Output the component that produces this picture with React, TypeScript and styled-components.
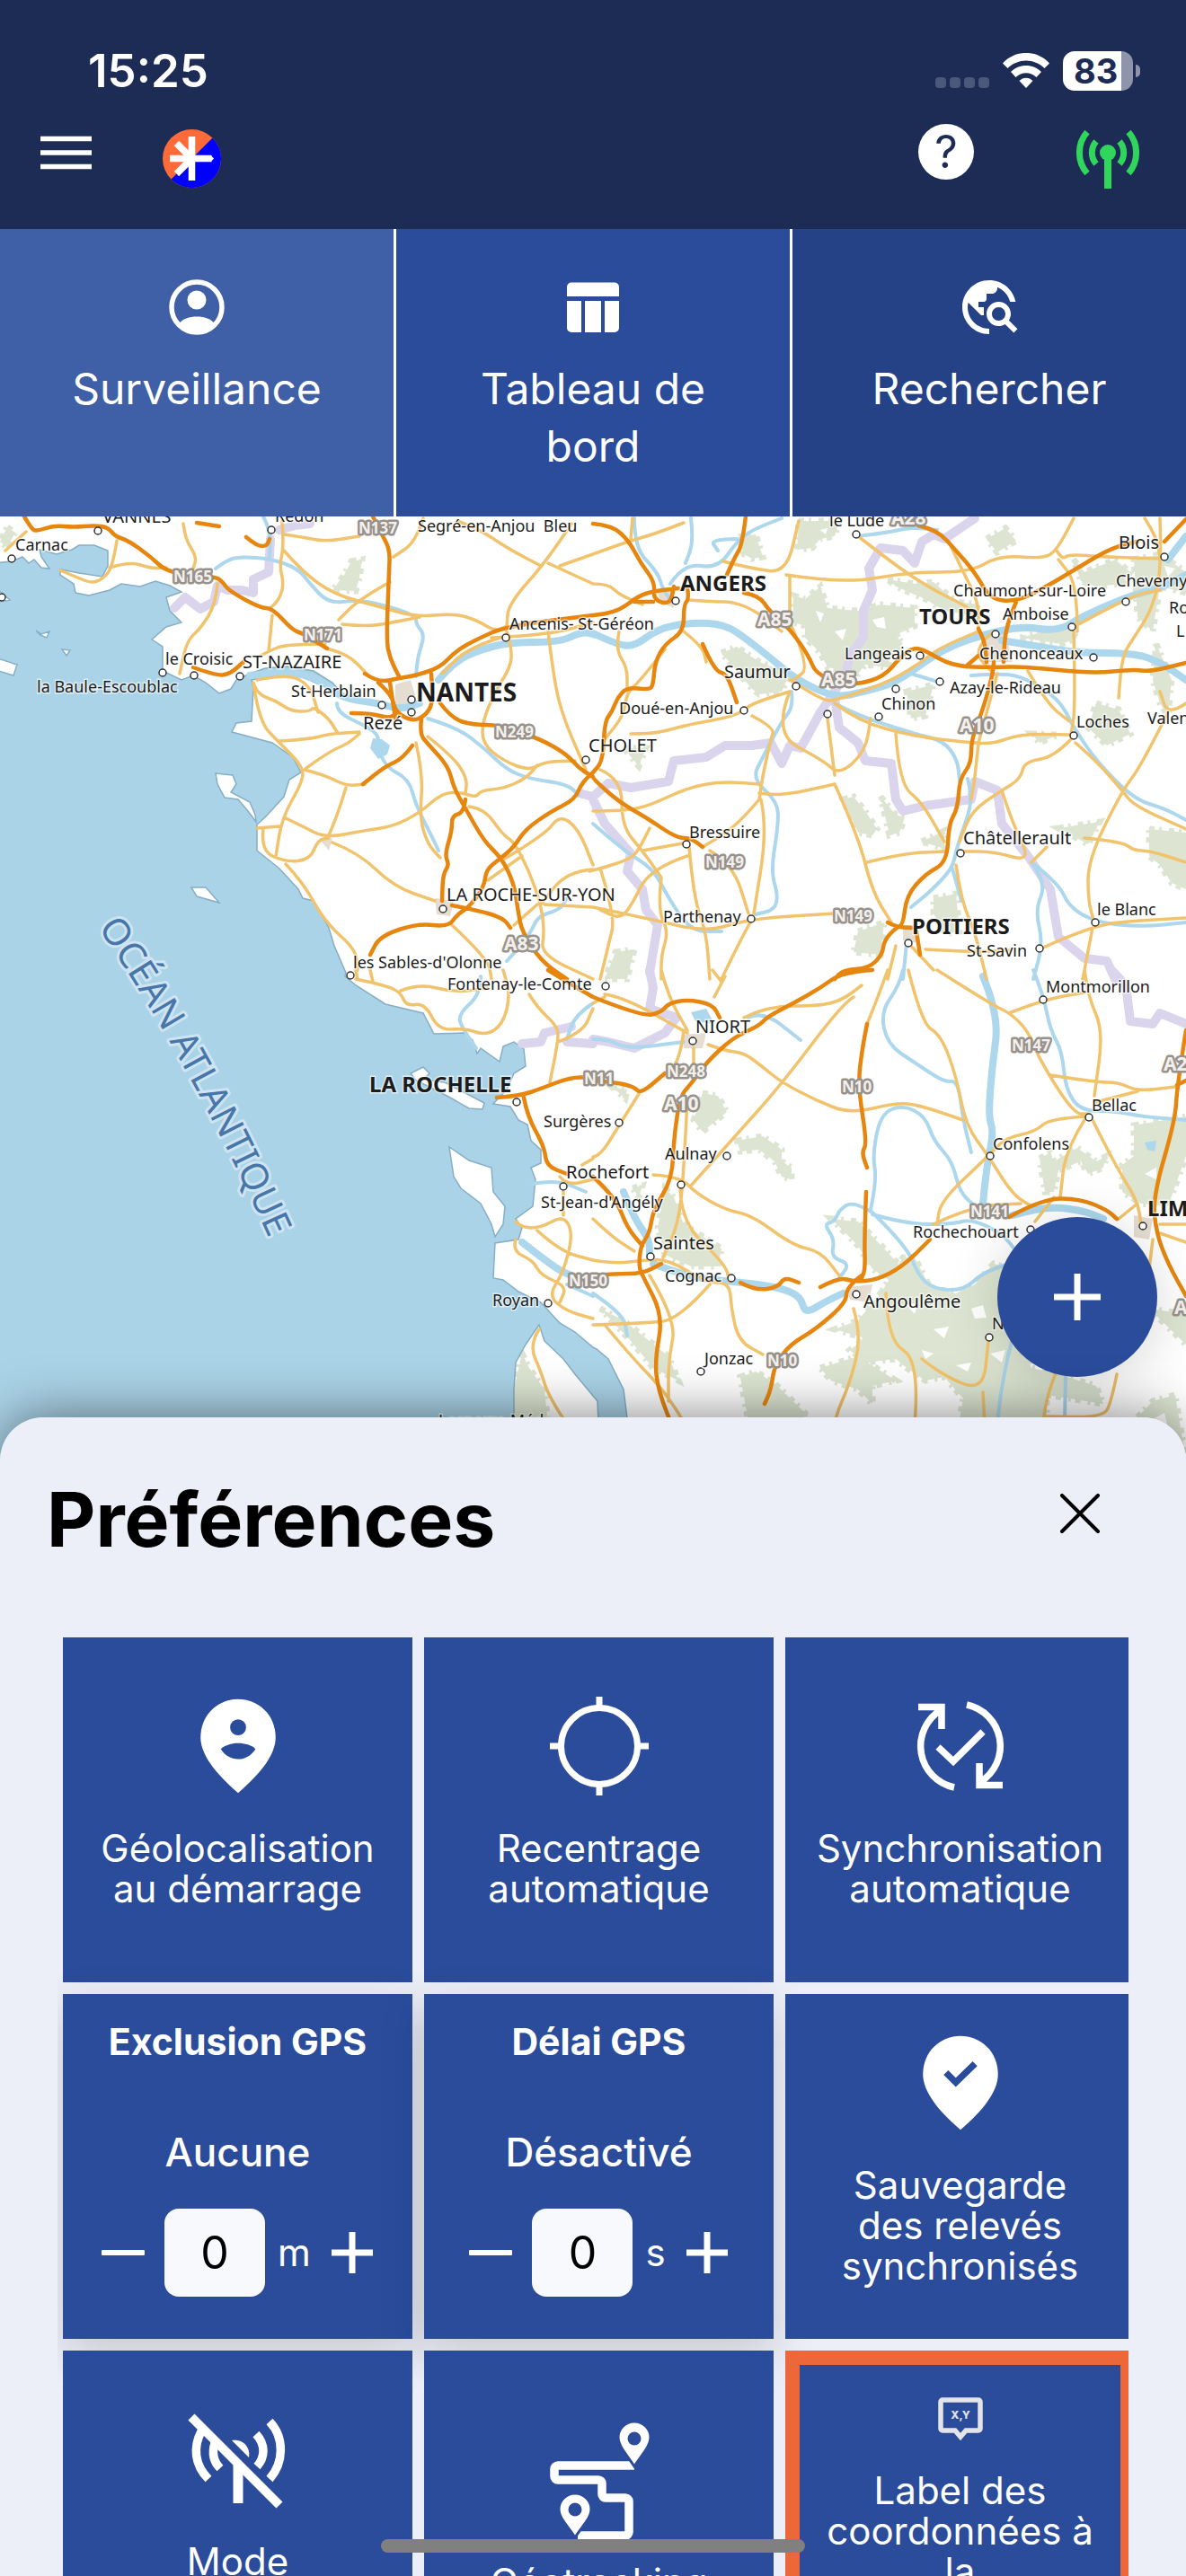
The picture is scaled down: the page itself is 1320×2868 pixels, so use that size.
import React, { useState } from "react";
import styled, { createGlobalStyle } from "styled-components";

const color = {
  header: "#1d2c55",
  blue: "#2a4c9b",
  blueLight: "#3f5fa6",
  blueDark: "#254286",
  sheet: "#eceff8",
  orange: "#ec683b",
  green: "#2fd65b",
  white: "#ffffff",
};

const GlobalStyle = createGlobalStyle`
  *, *::before, *::after { box-sizing: border-box; }
  body {
    margin: 0;
    background: ${color.sheet};
    font-family: Inter, "Liberation Sans", sans-serif;
  }
  button, input { font: inherit; color: inherit; }
  button { margin: 0; padding: 0; border: 0; background: none; cursor: pointer; }
  svg { display: block; }
`;

const Screen = styled.div`
  position: relative;
  display: flex;
  flex-direction: column;
  height: 100vh;
  overflow: hidden;
`;

/* ---------- header ---------- */

const Header = styled.header`
  flex: none;
  background: ${color.header};
  color: ${color.white};
`;

const StatusBar = styled.div`
  display: flex;
  align-items: center;
  justify-content: space-between;
  height: 112px;
  padding: 46px 51px 0 98px;
`;

const Clock = styled.time`
  font-size: 51px;
  line-height: 64px;
  font-weight: 600;
`;

const StatusIcons = styled.div`
  display: flex;
  align-items: center;
  gap: 15px;
`;

const BatteryBox = styled.div`
  display: flex;
  align-items: center;
  gap: 3px;
`;

const BatteryLevel = styled.div`
  width: 78px;
  height: 44px;
  border-radius: 13px;
  padding-left: 12px;
  background: linear-gradient(to right, #fff 83%, #8e95aa 83%);
  color: ${color.header};
  font-size: 38px;
  line-height: 44px;
  font-weight: 700;
`;

const BatteryNub = styled.div`
  width: 5px;
  height: 14px;
  border-radius: 0 7px 7px 0;
  background: #8e95aa;
`;

const Toolbar = styled.div`
  display: flex;
  align-items: flex-start;
  justify-content: space-between;
  height: 143px;
  padding: 26px 50px 0 41px;
`;

const ToolGroup = styled.div<{ $gap: number }>`
  display: flex;
  align-items: flex-start;
  gap: ${(p) => p.$gap}px;
`;

const ToolButton = styled.button<{ $lowered?: boolean }>`
  padding-top: ${(p) => (p.$lowered ? 6 : 0)}px;
`;

const HelpBadge = styled.span`
  display: block;
  width: 62px;
  height: 62px;
  border-radius: 50%;
  background: ${color.white};
  color: ${color.header};
  font-size: 50px;
  line-height: 62px;
  text-align: center;
`;

/* ---------- tabs ---------- */

const Tabs = styled.nav`
  flex: none;
  display: grid;
  grid-template-columns: repeat(3, minmax(0, 1fr));
  gap: 3px;
  background: ${color.white};
`;

const Tab = styled.button<{ $tone: string }>`
  display: flex;
  flex-direction: column;
  align-items: center;
  gap: 23px;
  padding: 51px 60px 46px;
  background: ${(p) => p.$tone};
  color: ${color.white};
  font-size: 48px;
  line-height: 64px;
`;

/* ---------- map ---------- */

const MapArea = styled.section`
  position: relative;
  flex: none;
`;

const MapSvg = styled.svg`
  width: 100%;
  height: auto;
  font-family: "Noto Sans", "Open Sans", sans-serif;
`;

const AddButton = styled.button`
  position: absolute;
  right: 32px;
  bottom: 92px;
  display: grid;
  place-items: center;
  width: 178px;
  height: 178px;
  border-radius: 50%;
  background: ${color.blue};
  box-shadow: 0 8px 60px rgba(0, 0, 0, 0.16);
`;

/* ---------- preferences sheet ---------- */

const Sheet = styled.section`
  position: relative;
  flex: 1 1 0;
  min-height: 0;
  margin-top: -47px;
  padding: 64px 64px 0 52px;
  border-radius: 48px 48px 0 0;
  background: ${color.sheet};
  box-shadow: 0 0 60px rgba(0, 0, 0, 0.5);
  overflow: hidden auto;
  scrollbar-width: none;
`;

const SheetHead = styled.div`
  display: flex;
  align-items: flex-start;
  justify-content: space-between;
  padding-right: 11px;
  margin-bottom: 81px;
`;

const SheetTitle = styled.h1`
  margin: 0;
  font-size: 84px;
  line-height: 100px;
  font-weight: 700;
  color: #000;
`;

const CloseButton = styled.button`
  display: grid;
  place-items: center;
  width: 86px;
  height: 86px;
`;

const GridViewport = styled.div`
  margin-left: 12px;
  padding-left: 6px;
  overflow: clip;
`;

/* The grid is slightly wider than its viewport, which trims the last column. */
const Grid = styled.div`
  display: grid;
  grid-template-columns: repeat(3, minmax(0, 1fr));
  grid-auto-rows: 384px;
  gap: 13px;
  margin-right: -7px;
`;

const Tile = styled.button`
  display: flex;
  flex-direction: column;
  align-items: center;
  justify-content: center;
  gap: 31px;
  padding: 0 28px 21px;
  background: ${color.blue};
  color: ${color.white};
`;

const OutlinedTile = styled(Tile)`
  justify-content: flex-start;
  padding: 36px 20px 0;
  border: 16px solid ${color.orange};
`;

const TileLabel = styled.span<{ $lines?: number }>`
  min-height: ${(p) => (p.$lines ?? 1) * 45}px;
  font-size: 42px;
  line-height: 45px;
  text-align: center;
`;

const GpsTile = styled.div`
  display: flex;
  flex-direction: column;
  align-items: center;
  padding-top: 29px;
  background: ${color.blue};
  color: ${color.white};
  box-shadow: 0 16px 48px rgba(0, 0, 0, 0.16);
`;

const GpsTitle = styled.h2`
  margin: 0 0 72px;
  font-size: 41px;
  line-height: 48px;
  font-weight: 700;
`;

const GpsState = styled.div`
  margin-bottom: 36px;
  font-size: 44px;
  line-height: 54px;
  font-weight: 500;
`;

const Stepper = styled.div`
  display: flex;
  align-items: center;
`;

const StepButton = styled.button`
  display: grid;
  place-items: center;
  width: 48px;
  height: 98px;
`;

const StepValue = styled.label`
  display: flex;
  align-items: center;
  gap: 14px;
  margin: 0 22px;
  font-size: 42px;
  line-height: 50px;
`;

const StepInput = styled.input`
  width: 112px;
  height: 98px;
  border: 0;
  border-radius: 16px;
  padding: 0;
  background: #f7f9fd;
  color: #000;
  font-size: 50px;
  text-align: center;
`;

const HomeIndicator = styled.div`
  position: absolute;
  left: 50%;
  bottom: 26px;
  width: 472px;
  height: 15px;
  margin-left: -236px;
  border-radius: 8px;
  background: #808080;
`;

/* ---------- icons ---------- */

const WifiIcon = () => (
  <svg width="52" height="40" viewBox="0 0 52 40" fill="#fff">
    <path d="M0 11.500C14-4 38-4 52 11.500L46.500 17C35 5.500 17 5.500 5.500 17z" />
    <path d="M9 21C18 11.500 34 11.500 43 21L37.500 27C31 20.500 21 20.500 14.500 27z" />
    <path d="M18.500 31C22.500 26.500 29.500 26.500 33.500 31L26 39z" />
  </svg>
);

const SignalDots = () => (
  <svg width="60" height="40" viewBox="0 0 60 40" fill="#4c587b">
    {[0, 16, 32, 48].map((x) => (
      <rect key={x} x={x} y="27" width="12" height="12" rx="4" />
    ))}
  </svg>
);

const MenuIcon = () => (
  <svg width="65" height="64" viewBox="0 0 65 64" stroke="#fff" strokeWidth="5.500">
    <path d="M4 16.500H61M4 32H61M4 47.500H61" />
  </svg>
);

const LogoIcon = () => (
  <svg width="65" height="65" viewBox="-32.500 -32.500 65 65">
    <circle r="32.500" fill="#ff6a39" />
    <path d="M23-23A32.500 32.500 0 0 1-23 23z" fill="#0000ff" />
    <path d="M0-24.500V24.500M-24.500 0H22M0 0L-17-17M0 0L-17 17" stroke="#fff" strokeWidth="7.500" fill="none" />
    <path d="M21-3.700L24.500 0L21 3.700z" fill="#fff" />
  </svg>
);

const AntennaIcon = () => (
  <svg width="74" height="68" viewBox="-37 -26 74 68" fill="none" stroke={color.green} strokeWidth="7">
    <circle r="9" fill={color.green} stroke="none" />
    <path d="M0 0V40" strokeWidth="8" />
    <path d="M-13-12.500A19 19 0 0 0-13 12.500M13-12.500A19 19 0 0 1 13 12.500" />
    <path d="M-23-23A35 35 0 0 0-23 23M23-23A35 35 0 0 1 23 23" />
  </svg>
);

const AccountIcon = () => (
  <svg width="72" height="72" viewBox="-36 -36 72 72">
    <circle r="28" fill="none" stroke="#fff" strokeWidth="5.500" />
    <circle cy="-8" r="10.500" fill="#fff" />
    <path d="M-19 18C-14 8 14 8 19 18C11 30-11 30-19 18z" fill="#fff" />
  </svg>
);

const TableIcon = () => (
  <svg width="72" height="72" viewBox="-36 -36 72 72" fill="#fff">
    <path d="M-24-27.500H24A5 5 0 0 1 29-22.500V-12H-29V-22.500A5 5 0 0 1-24-27.500z" />
    <path d="M-29-7H-13V28H-24A5 5 0 0 1-29 23zM-9-7H9V28H-9zM13-7H29V23A5 5 0 0 1 24 28H13z" />
  </svg>
);

const GlobeSearchIcon = () => (
  <svg width="72" height="72" viewBox="0 0 24 24" fill="#fff">
    <path d="M19.300 16.900c.4-.7.7-1.500.7-2.400 0-2.500-2-4.500-4.500-4.500S11 12 11 14.500s2 4.500 4.500 4.500c.9 0 1.700-.3 2.400-.7l3.200 3.200 1.400-1.400-3.200-3.200zm-3.800.1c-1.400 0-2.500-1.100-2.500-2.500s1.100-2.500 2.500-2.500 2.500 1.100 2.500 2.500-1.100 2.500-2.500 2.500zM12 20v2C6.480 22 2 17.520 2 12S6.480 2 12 2c4.840 0 8.870 3.440 9.800 8h-2.070c-.64-2.460-2.400-4.470-4.730-5.410V5c0 1.100-.9 2-2 2h-2v2c0 .55-.45 1-1 1H8v2h2v3H9l-4.790-4.790C4.080 10.790 4 11.380 4 12c0 4.410 3.590 8 8 8z" />
  </svg>
);

const pinShape = "M12 2C7.800 2 4 5.220 4 10.200c0 3.320 2.670 7.250 8 11.800 5.330-4.550 8-8.480 8-11.800C20 5.220 16.200 2 12 2z";

const PersonPinIcon = () => (
  <svg width="120" height="120" viewBox="0.500 0.500 23 23">
    <path d={pinShape} fill="#fff" />
    <circle cx="12" cy="8" r="1.700" fill={color.blue} />
    <path d="M8.300 12.600C10 11 14 11 15.700 12.600C13.900 15.500 10.100 15.500 8.300 12.600z" fill={color.blue} />
  </svg>
);

const CheckPinIcon = () => (
  <svg width="120" height="120" viewBox="0.500 0.500 23 23">
    <path d={pinShape} fill="#fff" />
    <path d="M8.900 9.800L11 11.900L15.100 7.900" fill="none" stroke={color.blue} strokeWidth="1.400" />
  </svg>
);

const TargetIcon = () => (
  <svg width="120" height="120" viewBox="-60 -60 120 120" fill="none" stroke="#fff" strokeWidth="7">
    <circle r="42.500" />
    <path d="M0-55V-42M0 55V42M-55 0H-42M55 0H42" />
  </svg>
);

const SyncCheckIcon = () => (
  <svg width="120" height="120" viewBox="-60 -60 120 120" fill="none" stroke="#fff" strokeWidth="7.500">
    <path d="M-7 46A47 47 0 0 1-22-40M-47-43.500H-21V-19" />
    <path d="M7-46A47 47 0 0 1 22 40M47 43.500H21V19" />
    <path d="M-25 1L-8 17L25-16" />
  </svg>
);

const AntennaOffIcon = () => (
  <svg width="120" height="120" viewBox="-60 -62 120 120" fill="none" stroke="#fff" strokeWidth="9.500">
    <path d="M-52-49L46 49" strokeWidth="10" />
    <path d="M0 4V47" strokeWidth="11" />
    <path d="M-7-23C5-25 14-16 12-4z" fill="#fff" stroke="none" />
    <path d="M-33 20C-49 4-50-16-41-33M-20 8C-28 0-29-10-26-20" />
    <path d="M35-44C52-26 51 2 35 20M20-30C31-18 30-4 21 6" />
  </svg>
);

const RouteIcon = () => (
  <svg width="120" height="120" viewBox="-60 -62 120 120" overflow="visible" fill="none" stroke="#fff" strokeWidth="9.500">
    <path
      d="M39-18H-46A4 4 0 0 0-50-14V-6A4 4 0 0 0-46-2H-1A4 4 0 0 1 3 2V14A4 4 0 0 0 7 18H29A4 4 0 0 1 33 22V56A4 4 0 0 1 29 60H-24"
      strokeLinejoin="round"
    />
    <g fill="#fff" stroke={color.blue} strokeWidth="3">
      <path d="M39-17C29-32 21-40 21-49A18 18 0 0 1 57-49C57-40 49-32 39-17z" />
      <path d="M-27 62C-37 47-45 40-45 31A18 18 0 0 1-9 31C-9 40-17 47-27 62z" />
    </g>
    <g fill={color.blue} stroke="none">
      <circle cx="39" cy="-48" r="7.500" />
      <circle cx="-27" cy="31" r="7.500" />
    </g>
  </svg>
);

const XyLabelIcon = () => (
  <svg width="50" height="50" viewBox="0 0 50 50">
    <path
      d="M5 3H45A2 2 0 0 1 47 5V35A2 2 0 0 1 45 37H31L25 44L19 37H5A2 2 0 0 1 3 35V5A2 2 0 0 1 5 3z"
      fill="none"
      stroke="#e4e4e8"
      strokeWidth="5.500"
    />
    <text x="25" y="24" textAnchor="middle" fontSize="12" fontWeight="800" fill="#e4e4e8">
      X,Y
    </text>
  </svg>
);

const PlusIcon = ({ size, weight }: { size: number; weight: number }) => (
  <svg width={size} height={size} viewBox={`0 0 ${size} ${size}`} stroke="#fff" strokeWidth={weight}>
    <path d={`M${size / 2} 0V${size}M0 ${size / 2}H${size}`} />
  </svg>
);

const MinusIcon = () => (
  <svg width="48" height="6" viewBox="0 0 48 6">
    <rect width="48" height="6" rx="1" fill="#fff" />
  </svg>
);

const CloseIcon = () => (
  <svg width="44" height="44" viewBox="0 0 44 44" stroke="#000" strokeWidth="4" strokeLinecap="round">
    <path d="M2 2L42 42M42 2L2 42" />
  </svg>
);

/* ---------- map data ---------- */

type SheetId = "a" | "b" | "c" | "d";
const origin: Record<SheetId, [number, number]> = {
  a: [0, 570],
  b: [660, 570],
  c: [0, 1080],
  d: [660, 1080],
};

const project = (sheet: SheetId, x: number, y: number): [number, number] => [
  Math.round(origin[sheet][0] + x / 2.376),
  Math.round(origin[sheet][1] + y / 3),
];

const points = (sheet: SheetId, list: string) =>
  list
    .trim()
    .split(/\s+/)
    .map((pair) => {
      const [x, y] = pair.split(",").map(Number);
      return project(sheet, x, y).join(" ");
    });

const lines = (sheet: SheetId, data: string, close = "") =>
  data
    .split(";")
    .filter((part) => part.trim())
    .map((part) => "M" + points(sheet, part).join("L") + close)
    .join("");

/* Rounds the corners of a traced line by running curves between its midpoints. */
const curves = (sheet: SheetId, data: string) =>
  data
    .split(";")
    .filter((part) => part.trim())
    .map((part) => {
      const pts = points(sheet, part).map((p) => p.split(" ").map(Number));
      let d = `M${pts[0].join(" ")}`;
      for (let i = 1; i < pts.length - 1; i++) {
        const [x, y] = pts[i];
        const [nx, ny] = pts[i + 1];
        d += `Q${x} ${y} ${(x + nx) / 2} ${(y + ny) / 2}`;
      }
      return d + `L${pts[pts.length - 1].join(" ")}`;
    })
    .join("");

const seaPath =
  "M" +
  [
    ...points("a", "-20,170 30,165 60,150 75,170 90,158 110,185 130,190 110,150 105,125 150,140 190,125 210,110 250,110 285,130 285,180 270,215 210,205 160,192 160,210 195,240 200,270 235,280 290,262 320,240 370,250 410,232 450,245 480,268 440,285 450,330 480,370 440,385 402,425 430,450 430,530 480,560 510,545 545,570 580,605 610,590 625,560 660,540 700,522 760,515 830,530 880,570 900,600 850,580 800,552 750,540 665,562 670,590 665,700 625,705 612,735 720,770 775,820 795,870 765,895 750,950 700,1020 680,1045 680,1130 740,1190 790,1260 800,1290 830,1300 870,1390 885,1450 915,1540"),
    ...points("c", "912,20 940,50 1020,115 1120,145 1148,212 1225,210 1250,235 1262,278 1272,262 1322,305 1330,255 1360,240 1385,265 1390,320 1360,345 1340,400 1305,448 1350,455 1370,500 1395,515 1405,570 1430,600 1430,645 1405,660 1415,700 1410,790 1365,830 1380,860 1370,900 1310,912 1305,1030 1330,1035 1370,1075 1430,1110 1480,1180 1520,1210 1568,1260"),
    ...points("d", "10,1265 40,1300 80,1400 105,1640 20,1640 12,1440"),
    ...points("c", "1520,1350 1490,1300 1440,1240 1425,1185 1390,1250 1365,1310 1358,1400 1358,1640 -20,1640"),
  ].join("L") +
  "z";

const islands =
  lines("a", "570,872 615,880 625,910 610,935 660,970 675,1010 678,1035 655,1000 630,960 595,955 575,910;505,1255 545,1255 580,1305 520,1285;-5,490 45,510 35,545 -5,530;95,395 110,408 130,400 124,420 108,410;165,460 185,462 175,480;-5,260 25,295 -5,300", "z") +
  lines("c", "1085,345 1120,325 1135,345 1120,365 1175,375 1230,410 1280,445 1275,465 1240,462 1190,425 1150,400 1100,370;1187,590 1240,635 1300,660 1305,740 1335,790 1330,850 1308,892 1300,850 1270,780 1220,730 1200,690", "z");

const forests =
  lines("a", "930,165 958,160 950,220 940,265 880,262 910,210;20,50 40,70 30,90 20,120 0,100", "z") +
  lines("b", "545,30 650,30 640,80 600,90 580,120 540,125;385,85 430,75 450,150 420,155 400,140;530,280 560,290 600,250 620,320 700,330 760,310 850,320 850,380 800,410 820,440 790,470 780,520 720,510 700,540 620,520 600,470 560,420 560,380 530,370;780,225 850,240 900,235 960,300 1020,310 1000,345 930,330 880,290 800,250;1040,90 1090,55 1120,95 1070,135;340,470 380,450 440,500 520,540 500,600 440,610 420,590;830,600 900,575 880,680 840,690;660,960 690,950 720,1000 750,1060 740,1080 700,1070;760,950 800,1010 825,1020 810,1070 785,1080;1330,640 1390,660 1420,740 1360,780 1310,720;1430,160 1500,140 1568,200 1568,270 1500,250 1480,400 1440,350;1470,1060 1568,1070 1568,1260 1530,1240 1500,1180 1470,1150;900,1290 960,1275 970,1400 930,1410 900,1340;700,1400 770,1370 760,1480 690,1470;60,1470 110,1460 90,1560 30,1560;1230,1055 1340,1035 1310,1110;80,790 140,790 120,850;1490,440 1530,560 1520,680 1500,640 1480,560;870,1100 930,1065 930,1125;1130,420 1240,440 1280,420 1250,380;1160,740 1230,745 1180,770;1270,160 1300,200 1380,160 1420,200 1400,240 1330,250 1290,230", "z") +
  lines("c", "1380,1280 1400,1330 1440,1400 1460,1640 1360,1640 1360,1400", "z") +
  lines("d", "290,410 330,420 355,475 290,540 265,500;380,570 450,555 500,600 500,640 525,660 525,700 500,690 480,640 440,600 390,605;1180,630 1210,610 1220,640 1280,595 1330,640 1360,620 1350,660 1310,680 1290,640 1230,670 1220,740 1195,740;1430,520 1568,490 1568,620 1520,790 1450,780 1400,740 1400,650 1430,620;190,730 215,760 240,850 340,930 330,990 260,990 190,950 170,860;760,1080 820,960 850,960 890,1060 960,1080 1010,1050 1060,980 1110,1000 1110,1200 1160,1330 1230,1350 1330,1390 1350,1450 1200,1420 1200,1500 1050,1640 950,1640 980,1430 930,1360 880,1370 830,1330 800,1300 720,1310 680,1270 720,1230 640,1200 700,1170;390,1360 430,1340 480,1380 560,1480 540,1640 430,1640;630,830 700,840 770,930 820,1000 790,1040 740,1000 700,920;600,1330 700,1290 800,1370 740,1390 740,1450 700,1400 630,1370;20,1130 80,1170 200,1290 225,1370 160,1330 100,1240;1470,1130 1568,1150 1568,1250;1440,1493 1480,1440 1540,1420 1568,1640 1440,1640;50,390 90,400 85,430;105,730 130,720 120,760", "z");

/* Clearings break up the larger woods. */
const clearings =
  lines("b", "640,400 670,390 660,430;740,360 770,350 775,390 750,385;1510,180 1540,190 1520,215;600,60 620,55 615,75;590,330 610,340 600,370", "z") +
  lines("d", "830,1120 860,1110 850,1150;900,1200 940,1190 930,1230;1000,1130 1030,1120 1040,1160 1010,1165;1050,1280 1090,1270 1080,1310;870,1270 900,1280 880,1300;1460,680 1490,660 1490,700;1480,1500 1510,1480 1520,1530;960,1320 1000,1310 990,1340;220,900 250,910 240,940", "z");

const towns = lines("a", "1045,575 1085,560 1100,620 1080,660 1045,640;1150,1290 1200,1300 1190,1350 1155,1345;845,1095 880,1090 870,1130", "z") + lines("b", "170,265 210,255 215,320 175,300;1030,410 1090,400 1110,500 1040,500;820,1380 850,1380 860,1440 820,1430", "z") + lines("d", "235,215 300,210 290,260 240,260;670,1060 740,1050 730,1110 680,1100;1430,820 1480,830 1470,900 1430,890", "z");

const rivers =
  curves("a", "570,190 600,160 640,150 715,155 790,190 820,240 870,305 940,295 1000,305 1100,345 1100,375 1125,410 1105,480 1100,550;890,640 890,670 960,710 1000,740 1000,790;1130,690 1210,720 1280,790 1340,860 1400,890 1500,910 1530,945;1000,790 1015,850 1080,890 1100,980 1140,1080 1160,1130;695,15 715,60 712,150;1340,1500 1400,1420 1420,1350 1480,1330 1500,1290") +
  curves("b", "110,20 110,120 170,200 185,260 210,300;205,240 240,170 330,190 380,100 420,60 500,20;260,20 265,100 245,170;380,90 310,90 330,130;640,640 700,680 850,740 930,765 965,830 970,900;525,600 530,650 500,700 450,820 420,890 490,970 490,1050 470,1200 490,1280 480,1330 430,1345;840,540 920,570;1000,545 1060,540 1130,545 1230,620 1270,720 1330,830 1430,960 1510,990 1568,1030;990,890 1005,960 980,1060 960,1130 950,1190 890,1270 840,1320;1160,1170 1200,1240 1170,1330 1190,1440 1165,1560;1160,1170 1230,1240 1260,1320 1330,1370 1450,1385 1568,1370;0,1040 80,1130 160,1190 200,1290 260,1400 340,1400;950,1190 975,1300;830,1440 820,1560;700,80 780,70 840,50 910,60") +
  curves("c", "1270,20 1270,80 1210,150 1225,200 1260,260;1410,715 1470,700 1550,740;1568,110 1520,150 1500,230;1500,1050 1568,1090") +
  curves("d", "820,0 810,50 760,140 780,250 850,310 930,375 965,370 980,500 1000,610;735,800 750,700 740,620 760,480 820,450 880,490 900,570 950,640 970,740 1010,790;1165,0 1190,80 1210,200 1240,270 1250,400 1290,470 1380,470 1450,490 1568,500;740,810 690,770 650,800 640,840 610,850 640,900 630,960 680,980 650,1030;740,810 830,920 860,1020 900,1065 980,1070 1030,1010 1100,980;740,815 830,850 950,850 1000,830 1080,880 1120,940;0,230 40,230 90,265 240,240;410,160 450,135 550,235;0,1080 80,1150 90,1220;1110,1230 1080,1360 1060,1640;1250,1360 1245,1640");

const wideRivers =
  curves("a", "660,545 760,530 850,560 900,620 1000,640 1060,660 1110,640;1160,560 1200,500 1270,460 1350,435 1480,435 1540,400 1575,410") +
  curves("b", "0,405 60,440 110,450 170,390 260,370 350,375 410,430 470,490 540,560 640,620 720,600 800,570 900,480 960,440 1030,410 1130,380 1230,400 1290,350 1420,280 1500,255 1568,210;1080,430 1180,450 1280,470 1430,470 1500,500 1568,560;1520,160 1568,80") +
  curves("c", "1380,910 1470,1000 1510,1020") +
  curves("d", "1030,20 1075,150 1055,330 1045,490 1060,540 1040,660 1030,780;160,980 260,1030 380,1040 490,1060 550,1090 560,1150 610,1110 660,1080;80,740 110,830 150,900 150,960;1110,820 1190,790 1290,800 1350,830");

const lakes = lines("a", "985,755 1010,760 1030,780 1025,810 1000,825 978,790", "z") + lines("d", "260,140 300,130 320,180 270,170;1460,575 1490,570 1485,605 1465,600", "z");

const borders =
  lines("a", "715,90 710,200 670,225 670,270 640,260 600,262 575,245 565,300 530,325 490,285 460,320;1530,940 1568,950;740,60 780,45 820,40") +
  lines("b", "1010,20 930,90 900,75 870,100 850,170 820,130 760,120 730,190 740,260 715,330 715,420 680,480 670,530 640,600 600,670 570,740 550,790 520,780 500,840 470,770 420,780 350,780 300,820 215,830 200,900 100,920 40,905 0,950;640,620 650,720 700,770 720,830 790,840 800,960 820,1000 880,980 1000,960 1010,900 1070,930 1080,1040 1150,1150 1210,1260 1230,1420 1300,1490 1360,1500 1380,1560;0,960 30,1040 100,1140 90,1200 130,1260 140,1330 170,1380 150,1540") +
  lines("c", "1380,245 1430,240 1440,210 1510,190;1500,240 1568,245") +
  lines("d", "150,0 160,60 150,130 220,160 190,210 110,260 40,240 0,230;1370,0 1410,50 1420,170 1480,180 1500,145 1568,180");

const minorRoads =
  curves("a", "15,130 70,65;310,95 300,170 280,215 245,240 200,215 160,195;290,185 345,165 400,190 440,185;485,40 490,90 520,150 510,190;575,240 570,310 530,390 495,430 475,540;750,75 800,85 860,100 950,80;745,30 750,110 740,180 752,240 740,290 715,320;750,130 800,200 885,275 1000,315 1100,350 1200,340 1260,360 1310,400 1340,380;720,345 710,465;690,480 710,465 750,445 860,440;865,455 920,475 970,540;1120,20 1100,100 1040,150;1030,235 950,290 895,360;905,375 970,385 1050,365 1110,350;1210,30 1270,60 1340,120 1430,180;1510,40 1450,160 1345,305 1340,380;1450,170 1568,240;1480,180 1568,140;1340,400 1355,460 1350,520 1310,600 1275,700 1275,775 1330,830 1400,865 1440,835 1520,830;1450,400 1460,500 1480,660 1550,860;670,570 680,610 730,630 770,665 820,665 830,650 870,690 890,735;680,560 760,540 820,580 840,670;670,570 685,700 740,770 800,850 800,900 745,1020 730,1150;740,765 820,760 870,740 950,735;810,855 870,800 920,775 950,740;805,860 860,880 915,915 965,910;915,920 895,1000 870,1080;750,1020 800,1050 860,1090 960,1065 1040,1050 1110,1005 1170,940 1220,935 1260,955 1270,930 1330,925 1390,890 1420,845;680,1055 740,1050;695,1060 690,1130 755,1170 820,1160 840,1095 870,1090;755,1175 800,1235 860,1370 940,1460 945,1530;880,1105 950,1140 1040,1250 1150,1300;1100,770 1120,880 1110,1020 1130,1110 1165,1155;1130,750 1200,820 1235,890 1230,940;1240,985 1280,990 1330,1080 1360,1100 1400,1200 1430,1310 1440,1400 1430,1480 1568,1560;1330,1160 1440,1080 1480,1010 1530,1060 1568,1180;1290,1230 1380,1150;1190,1375 1290,1490 1300,1560;1440,1310 1568,1320;1360,1380 1420,1310;1568,1195 1500,1200 1430,1310;1345,410 1240,450 1170,540;1300,420 1450,410 1568,370") +
  curves("b", "0,140 90,100 160,75 240,35;105,20 100,90;0,240 40,240 70,275 130,310;345,165 420,190 510,205 545,30;510,210 665,240 830,200 1000,200 1075,145 1190,155 1225,130 1270,20;520,215 520,370;255,295 320,300 370,300 430,330 500,400;240,400 290,450 300,500;190,460 120,570 90,600 80,680 30,760;70,400 60,460 90,520 90,590;700,80 800,180 900,260 980,310 1010,340;940,100 980,200 1020,300 1020,390;1225,130 1240,160 1260,140 1350,150 1500,155;1280,400 1280,240 1230,160;1500,20 1505,180 1480,320 1430,420 1400,480 1390,620;1270,385 1420,280 1500,260;1020,400 920,450 870,500 780,570 640,630 610,630 520,560;520,370 575,520 530,560;1270,400 1275,650 1265,745;1150,530 1200,640 1260,700;100,740 150,740 200,730 250,710 380,680 420,640 520,600;420,680 480,720 470,760 450,880 440,960;520,600 475,740 610,830 650,880 720,800 735,690;620,690 640,880;640,640 700,700 850,750 1000,770 1060,775 1130,740 1260,745;800,740 810,910 870,970 930,1100;1020,770 1010,890 1000,960;1070,540 1020,770;1265,760 1220,820 1140,835 1130,890 1080,930 1000,1000 970,1100;1275,770 1330,830 1400,930 1430,980 1568,1060;1520,670 1450,850 1400,930 1310,1160 1310,1300 1325,1370;1568,640 1520,680 1500,600;1300,1090 1400,1100 1430,1130 1470,1130 1568,1170;1080,930 1110,1040 1160,1170 1060,1135 980,1135;725,1170 820,1140 930,1135;640,910 700,1080 740,1270 790,1370;440,940 490,950 640,910;0,1000 80,1000 150,980 250,920 340,900 440,910;440,960 380,1050 290,1120;20,860 75,890 75,1050 130,1130 180,1220;130,1130 250,1105;150,1055 120,1130 95,1160 20,1190 -10,1200;255,1120 265,1290 300,1400 310,1560;445,960 460,1060 425,1340;310,1130 370,1180 410,1340;250,1150 150,1190 100,1320 70,1360 20,1330;0,1320 150,1360 300,1405 410,1360 640,1340;20,1190 60,1350 40,1450 20,1560;180,1220 170,1330 200,1400 180,1480 180,1560;420,1360 390,1430 340,1560;880,1460 1000,1470 1100,1465;1190,1455 1320,1380 1440,1365 1568,1355;960,1180 975,1300 1010,1400 1040,1560;835,1440 900,1530;780,1560 800,1450;1320,1390 1295,1560;1200,1120 1160,1170;1460,20 1490,80 1500,150;1060,400 1000,460 1060,540") +
  curves("c", "940,30 1020,50 1060,75 1075,120 1125,110 1160,200 1230,195 1285,220 1330,180 1350,80 1330,0;1060,70 1110,45 1200,75 1290,60;1400,80 1420,125 1475,190 1475,240 1455,375;1475,240 1540,210 1568,130;1365,840 1380,860 1430,860 1490,820 1515,880 1490,1010 1450,1090 1500,1140 1568,1165;1420,870 1480,940 1568,970;1365,900 1355,940 1410,970 1430,1020 1500,1055 1480,1110;1490,740 1490,820;1480,690 1500,720 1568,700;1540,650 1568,630;1425,1200 1400,1250 1430,1340 1450,1420 1520,1560;940,0 945,30;980,0 985,40") +
  curves("d", "30,80 80,90 250,210;180,0 200,90 250,200;0,110 30,90;305,250 350,270 400,275 450,325 500,375 590,435 680,480 800,445 860,450 980,500;780,0 750,100 725,180;690,90 660,110 500,380 380,550 260,720;400,160 460,120 600,120 660,100 710,50;835,0 870,180 920,215 960,350 985,520 1045,620 1110,750 1160,790;910,0 1060,120 1100,140 1150,200 1180,300 1270,480 1310,480;1100,145 1190,100 1300,75;1300,0 1310,90 1350,200 1325,420;1210,350 1330,375 1390,375 1440,405 1540,390;1440,405 1330,440;1310,490 1210,495 1170,540 1090,560 1045,620 920,770 910,850;1300,500 1250,600 1235,760;1320,500 1380,650 1440,770 1450,850;250,430 240,680 225,850 185,960;160,685 230,690 270,745 350,800 420,820 530,920 600,940 650,1020;230,720 230,840 350,980 360,1040;0,970 60,980 130,970 200,965 300,1045 360,1045 365,1130 385,1240 450,1285;310,1050 225,1170 130,1180 0,1185;30,1185 100,1290 200,1420 300,1640;150,1020 220,1170 200,1300 200,1440;690,1130 710,1220 680,1380 640,1493 620,1640;775,1080 780,1240 860,1300 845,1640;870,1300 920,1350 1030,1410 1045,1240;1030,1410 1040,1640;1240,1300 1190,1430 1190,1640;1385,1350 1370,1440 1350,1493 1200,1490;0,625 20,620 70,520 120,415;900,850 1000,790 1130,780;1390,830 1440,780;1500,850 1568,850;1500,880 1568,910;240,200 230,300 190,350;265,260 265,340;0,830 50,890 110,940;320,90 350,20;315,0 340,40;1480,900 1470,1000;1220,760 1170,840");

const majorRoads =
  curves("a", "65,15 80,50 95,65 140,45 195,52 250,45 285,50 305,80 340,95 400,150 445,205 570,215 590,235 605,265 690,320 720,320 775,395 800,405 865,455;520,35 580,48;650,85 680,115 705,115 712,90;985,15 1010,75 1032,125 1028,200 1022,430 1030,490 1055,550;965,540 1000,570 1055,555 1100,545 1165,520 1205,465 1260,425 1340,380 1568,345;1000,570 1035,610 1045,670 1090,700 1125,680 1145,640 1140,540;930,672 980,672 1030,690 1050,670;1030,570 1045,690;1165,640 1195,690 1250,710 1320,712 1430,760 1500,810 1530,855 1568,885;1115,690 1110,740 1130,775 1185,850 1200,920 1230,990 1280,1100 1325,1155 1360,1240 1370,1340 1380,1400 1430,1500 1500,1560;1568,870 1540,900 1520,960 1460,1000 1390,1060 1360,1120 1325,1155 1285,1195 1280,1250 1240,1320 1210,1345 1185,1385 1105,1375 1005,1415 980,1480;1230,960 1225,1005 1195,1015 1195,1065 1175,1145 1187,1180 1172,1210 1170,1300;1090,780 1065,825 1020,850 960,910;1195,1315 1260,1330 1330,1355 1350,1390;510,518 570,545 605,543 645,500") +
  curves("b", "0,38 50,45 95,95 125,170 165,235 160,295 205,310 215,250;0,345 60,340 120,280 165,265 225,255;110,300 160,300;405,15 395,110 375,150 355,210;250,250 255,290 240,310 240,400 190,440 165,500 160,575 150,595 90,585 65,620 50,670 30,700 25,830 0,870;0,885 0,890 70,970 140,1020 220,1090 260,1090 290,1120;400,270 440,280 465,330 520,390 570,480 590,540 650,570 700,575 770,550 810,490 840,455 870,455 950,515 1060,520 1140,515 1320,540 1430,525 1470,535 1568,505;860,45 910,60 960,130 1010,200 1050,290 1120,300 1200,250 1290,180 1370,120 1440,100;1568,25 1510,100;1120,300 1090,380 1085,500;1020,390 1035,430 1040,500;1060,500 1060,530 1030,660 1000,760 1000,840 970,890 965,990 940,1040 935,1170 880,1210 830,1280 820,1380 800,1390 770,1430 765,1480 730,1525 660,1530 640,1560;780,1370 800,1385 840,1390;855,1400 865,1480;290,440 320,530 355,540 380,635;985,515 1020,480") +
  curves("c", "1450,0 1500,40 1568,90;1315,425 1375,420 1430,395 1510,358 1568,360;1385,425 1395,490 1440,590 1445,655 1500,680") +
  curves("d", "0,90 130,155 180,140 200,110 250,100 315,115 335,160;740,0 660,5 600,60 530,110 460,155 440,185 370,225 300,310 260,380 230,420 215,560 210,700 160,800 150,880 125,920 120,990 130,1020 185,1155 165,1300 170,1400 220,1560;0,370 60,375 110,390 125,415 190,345;0,690 60,760 90,860 130,920;0,1020 60,1015 130,1015 180,980;725,180 710,270 700,390 725,580 710,610 725,660;722,740 718,900 720,1000 710,1030;390,1045 430,1070 490,1060 505,1025 545,1045;600,1060 650,1025 690,1040 750,1035 820,990 890,900;1100,825 1190,762 1290,765 1360,800 1385,830;710,1020 670,1060 670,1110 590,1200 520,1250 480,1320 470,1400 455,1450;1568,200 1545,390 1540,500 1480,760 1490,880 1520,980 1568,1090;1545,385 1568,370");

const dots: Record<SheetId, string> = {
  a: "259,64 32,156 5,285 717,60 430,536 513,545 635,549 1338,420 1009,645 1088,626 1089,669 1550,828 1171,1327 926,1549",
  b: "219,297 695,74 1510,150 1410,299 1267,385 1064,407 865,481 1324,487 918,568 800,592 536,582 400,664 619,674 755,684 1271,746 248,1111 971,1139 418,1360 833,1440 1328,1370 1180,1457",
  c: "1366,442 1490,724 1449,1112",
  d: "33,55 263,238 69,511 353,622 233,718 153,958 366,1030 695,1083 1051,622 1312,493 1191,99 1454,856 1047,1228 286,1342 1158,866",
};

type Place = [SheetId, number, number, string];

const villages: Place[] = [
  ["a", 40, 130, "Carnac"], ["a", 1106, 66, "Segré-en-Anjou \u00a0Bleu"], ["a", 1348, 394, "Ancenis- St-Géréon"],
  ["a", 436, 510, "le Croisic"], ["a", 98, 604, "la Baule-Escoublac"], ["a", 770, 618, "St-Herblain"],
  ["a", 933, 1524, "les Sables-d'Olonne"], ["a", 727, 32, "Redon"], ["b", 625, 48, "le Lude"],
  ["b", 1382, 250, "Cheverny"], ["b", 953, 281, "Chaumont-sur-Loire"], ["b", 1083, 360, "Amboise"],
  ["b", 1522, 340, "Ro"], ["b", 1543, 418, "L"], ["b", 665, 493, "Langeais"], ["b", 1021, 493, "Chenonceaux"],
  ["b", 943, 606, "Azay-le-Rideau"], ["b", 762, 659, "Chinon"], ["b", 68, 674, "Doué-en-Anjou"],
  ["b", 1279, 721, "Loches"], ["b", 1465, 709, "Valen"], ["b", 254, 1088, "Bressuire"],
  ["b", 185, 1372, "Parthenay"], ["b", 1333, 1346, "le Blanc"], ["b", 988, 1484, "St-Savin"],
  ["c", 1183, 66, "Fontenay-le-Comte"], ["c", 1437, 525, "Surgères"], ["c", 1430, 796, "St-Jean-d'Angély"],
  ["c", 1301, 1122, "Royan"], ["c", 1160, 1524, "Lesparre-Médoc"], ["d", 1198, 75, "Montmorillon"],
  ["d", 190, 634, "Aulnay"], ["d", 1319, 470, "Bellac"], ["d", 1058, 600, "Confolens"],
  ["d", 845, 895, "Rochechouart"], ["d", 190, 1041, "Cognac"], ["d", 1056, 1200, "N"], ["d", 295, 1317, "Jonzac"],
];

const smallTowns: Place[] = [
  ["a", 270, 37, "VANNES"], ["a", 641, 521, "ST-NAZAIRE"], ["a", 960, 727, "Rezé"], ["a", 1180, 1298, "LA ROCHE-SUR-YON"],
  ["b", 1390, 123, "Blois"], ["b", 347, 555, "Saumur"], ["b", -12, 801, "CHOLET"], ["b", 979, 1110, "Châtellerault"],
  ["c", 1497, 696, "Rochefort"], ["d", 271, 209, "NIORT"], ["d", 160, 932, "Saintes"], ["d", 716, 1129, "Angoulême"],
];

const cities: Place[] = [
  ["b", 230, 264, "ANGERS"], ["b", 862, 376, "TOURS"], ["b", 843, 1410, "POITIERS"],
  ["c", 977, 408, "LA ROCHELLE"], ["d", 1465, 822, "LIM"],
];

const nationalRoads: Place[] = [
  ["a", 948, 72, "N137"], ["a", 458, 234, "N165"], ["a", 803, 430, "N171"], ["a", 1310, 753, "N249"],
  ["b", 298, 1189, "N149"], ["b", 637, 1369, "N149"], ["c", 1545, 382, "N11"], ["c", 1505, 1056, "N150"],
  ["d", 1108, 270, "N147"], ["d", 195, 357, "N248"], ["d", 657, 409, "N10"], ["d", 998, 825, "N141"], ["d", 460, 1322, "N10"],
];

const motorways: Place[] = [
  ["a", 1333, 1465, "A83"], ["b", 790, 42, "A28"], ["b", 435, 382, "A85"], ["b", 603, 582, "A85"],
  ["b", 970, 735, "A10"], ["d", 1508, 335, "A20"], ["d", 187, 467, "A10"], ["d", 1537, 1150, "A20"],
];

const PlaceNames = ({ items }: { items: Place[] }) => (
  <>
    {items.map(([sheet, px, py, name]) => {
      const [x, y] = project(sheet, px, py);
      return (
        <text key={`${sheet}${px}${name}`} x={x} y={y}>
          {name}
        </text>
      );
    })}
  </>
);

const FranceMap = () => (
  <MapSvg viewBox="0 575 1320 1050" role="img" aria-label="Carte">
    <rect y="575" width="1320" height="1050" fill="#fff" />
    <path d={forests} fill="#dde5d2" stroke="#dde5d2" strokeWidth="7" strokeDasharray="6 5 3 8" />
    <path d={clearings} fill="#fff" />
    <path d={seaPath} fill="#aad3e7" stroke="#86aec6" strokeWidth="1.500" />
    <path d={islands} fill="#fff" stroke="#86aec6" strokeWidth="1.500" />
    <path d={towns} fill="#e6ddd2" />
    <g fill="none" strokeLinejoin="round" strokeLinecap="round">
      <path d={borders} stroke="#dad4ec" strokeWidth="10" />
      <path d={rivers} stroke="#acd7ec" strokeWidth="4" />
      <path d={wideRivers} stroke="#acd7ec" strokeWidth="8" />
      <path d={minorRoads} stroke="#f1c36c" strokeWidth="3.500" />
      <path d={majorRoads} stroke="#e6860f" strokeWidth="4.500" />
    </g>
    <path d={lakes} fill="#acd7ec" />
    <g fill="#fff" stroke="#333" strokeWidth="1.500">
      {(Object.keys(dots) as SheetId[]).flatMap((sheet) =>
        points(sheet, dots[sheet]).map((p) => {
          const [x, y] = p.split(" ");
          return <circle key={sheet + p} cx={x} cy={y} r="4" />;
        })
      )}
    </g>
    <g fill="#f3f0ec" stroke="#98928c" strokeWidth="5" strokeLinejoin="round" paintOrder="stroke" fontWeight="700">
      <g fontSize="17"><PlaceNames items={nationalRoads} /></g>
      <g fontSize="21"><PlaceNames items={motorways} /></g>
    </g>
    <g fill="#1c1c1c" stroke="#fff" strokeOpacity="0.6" strokeWidth="3" paintOrder="stroke">
      <g fontSize="18"><PlaceNames items={villages} /></g>
      <g fontSize="20"><PlaceNames items={smallTowns} /></g>
      <g fontSize="24" fontWeight="700"><PlaceNames items={cities} /></g>
      <g fontSize="28" fontWeight="700"><PlaceNames items={[["a", 1100, 632, "NANTES"]]} /></g>
    </g>
    <path id="ocean-line" d="M109 1033Q215 1185 318 1420" fill="none" />
    <text fontSize="41" fill="#4776a9" stroke="#cfe4f3" strokeWidth="6" strokeLinejoin="round" paintOrder="stroke">
      <textPath href="#ocean-line">OCÉAN ATLANTIQUE</textPath>
    </text>
  </MapSvg>
);

/* ---------- GPS tiles ---------- */

const GpsSetting = ({ title, unit, emptyState }: { title: string; unit: string; emptyState: string }) => {
  const [value, setValue] = useState(0);
  return (
    <GpsTile>
      <GpsTitle>{title}</GpsTitle>
      <GpsState>{value === 0 ? emptyState : `${value} ${unit}`}</GpsState>
      <Stepper>
        <StepButton aria-label={`Diminuer ${title}`} onClick={() => setValue(Math.max(0, value - 1))}>
          <MinusIcon />
        </StepButton>
        <StepValue>
          <StepInput
            inputMode="numeric"
            aria-label={title}
            value={value}
            onChange={(e) => setValue(Number(e.target.value) || 0)}
          />
          {unit}
        </StepValue>
        <StepButton aria-label={`Augmenter ${title}`} onClick={() => setValue(value + 1)}>
          <PlusIcon size={46} weight={7} />
        </StepButton>
      </Stepper>
    </GpsTile>
  );
};

export default function App() {
  return (
    <>
      <GlobalStyle />
      <Screen>
        <Header>
          <StatusBar>
            <Clock>15:25</Clock>
            <StatusIcons>
              <SignalDots />
              <WifiIcon />
              <BatteryBox>
                <BatteryLevel>83</BatteryLevel>
                <BatteryNub />
              </BatteryBox>
            </StatusIcons>
          </StatusBar>
          <Toolbar>
            <ToolGroup $gap={75}>
              <ToolButton aria-label="Menu"><MenuIcon /></ToolButton>
              <ToolButton $lowered aria-label="Accueil"><LogoIcon /></ToolButton>
            </ToolGroup>
            <ToolGroup $gap={112}>
              <ToolButton aria-label="Aide"><HelpBadge>?</HelpBadge></ToolButton>
              <ToolButton $lowered aria-label="Connexion"><AntennaIcon /></ToolButton>
            </ToolGroup>
          </Toolbar>
        </Header>

        <Tabs>
          <Tab $tone={color.blueLight}><AccountIcon />Surveillance</Tab>
          <Tab $tone={color.blue}><TableIcon />Tableau de bord</Tab>
          <Tab $tone={color.blueDark}><GlobeSearchIcon />Rechercher</Tab>
        </Tabs>

        <MapArea>
          <FranceMap />
          <AddButton aria-label="Ajouter"><PlusIcon size={52} weight={7} /></AddButton>
        </MapArea>

        <Sheet>
          <SheetHead>
            <SheetTitle>Préférences</SheetTitle>
            <CloseButton aria-label="Fermer"><CloseIcon /></CloseButton>
          </SheetHead>
          <GridViewport>
            <Grid>
              <Tile><PersonPinIcon /><TileLabel>Géolocalisation au démarrage</TileLabel></Tile>
              <Tile><TargetIcon /><TileLabel>Recentrage automatique</TileLabel></Tile>
              <Tile><SyncCheckIcon /><TileLabel>Synchronisation automatique</TileLabel></Tile>
              <GpsSetting title="Exclusion GPS" unit="m" emptyState="Aucune" />
              <GpsSetting title="Délai GPS" unit="s" emptyState="Désactivé" />
              <Tile><CheckPinIcon /><TileLabel>Sauvegarde<br />des relevés synchronisés</TileLabel></Tile>
              <Tile><AntennaOffIcon /><TileLabel $lines={2}>Mode</TileLabel></Tile>
              <Tile><RouteIcon /><TileLabel>Géotracking</TileLabel></Tile>
              <OutlinedTile><XyLabelIcon /><TileLabel>Label des coordonnées à la</TileLabel></OutlinedTile>
            </Grid>
          </GridViewport>
        </Sheet>
        <HomeIndicator />
      </Screen>
    </>
  );
}
